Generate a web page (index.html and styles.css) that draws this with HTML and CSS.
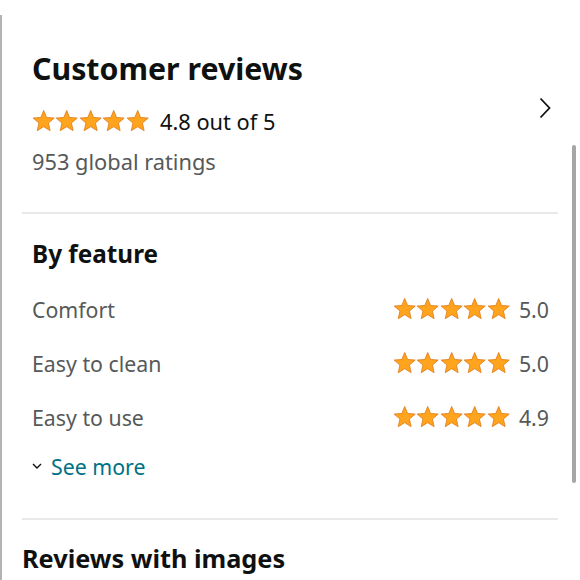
FILE: index.html
```html
<!DOCTYPE html>
<html>
<head>
<meta charset="utf-8">
<link rel="stylesheet" href="styles.css">
</head>
<body>
<svg width="0" height="0" class="defs">
  <defs>
    <symbol id="star" viewBox="0 0 24 24">
      <polygon points="12,1.2 14.95,8.4 22.8,9 16.85,14.1 18.6,21.9 12,17.8 5.4,21.9 7.15,14.1 1.2,9 9.05,8.4" fill="#ffa41c" stroke="#e07f1f" stroke-width="0.9" stroke-linejoin="round"/>
    </symbol>
  </defs>
</svg>
<div class="panel">
  <section class="summary">
    <h1 class="title">Customer reviews</h1>
    <div class="rating-row">
      <span class="stars">
        <svg class="star"><use href="#star"/></svg><svg class="star"><use href="#star"/></svg><svg class="star"><use href="#star"/></svg><svg class="star"><use href="#star"/></svg><svg class="star"><use href="#star"/></svg>
      </span>
      <span class="rating-text">4.8 out of 5</span>
      <svg class="chevron-right" viewBox="0 0 12 22"><polyline points="1.5,1.5 10.5,11 1.5,20.5" fill="none" stroke="#111" stroke-width="1.8"/></svg>
    </div>
    <div class="global">953 global ratings</div>
  </section>
  <hr class="divider">
  <section class="features">
    <h2 class="subtitle">By feature</h2>
    <div class="feature">
      <span class="feature-name">Comfort</span>
      <span class="feature-score">
        <span class="stars">
          <svg class="star"><use href="#star"/></svg><svg class="star"><use href="#star"/></svg><svg class="star"><use href="#star"/></svg><svg class="star"><use href="#star"/></svg><svg class="star"><use href="#star"/></svg>
        </span>
        <span class="score">5.0</span>
      </span>
    </div>
    <div class="feature">
      <span class="feature-name">Easy to clean</span>
      <span class="feature-score">
        <span class="stars">
          <svg class="star"><use href="#star"/></svg><svg class="star"><use href="#star"/></svg><svg class="star"><use href="#star"/></svg><svg class="star"><use href="#star"/></svg><svg class="star"><use href="#star"/></svg>
        </span>
        <span class="score">5.0</span>
      </span>
    </div>
    <div class="feature">
      <span class="feature-name">Easy to use</span>
      <span class="feature-score">
        <span class="stars">
          <svg class="star"><use href="#star"/></svg><svg class="star"><use href="#star"/></svg><svg class="star"><use href="#star"/></svg><svg class="star"><use href="#star"/></svg><svg class="star"><use href="#star"/></svg>
        </span>
        <span class="score">4.9</span>
      </span>
    </div>
    <a class="see-more" href="#">
      <svg class="chevron-down" viewBox="0 0 10 6"><polyline points="1,1 5,5 9,1" fill="none" stroke="#111" stroke-width="1.4"/></svg>
      <span>See more</span>
    </a>
  </section>
  <hr class="divider">
  <h2 class="images-title">Reviews with images</h2>
</div>
<div class="scrollbar"></div>
</body>
</html>
```
FILE: styles.css
```css
html, body {
  margin: 0;
  padding: 0;
  background: #fff;
  width: 580px;
  height: 580px;
  overflow: hidden;
  font-family: "Noto Sans", "Open Sans", sans-serif;
  color: #0f1111;
}
.defs { position: absolute; }
.panel {
  margin-top: 15px;
  height: 565px;
  border-left: 2px solid #b3b3b3;
  padding: 0 22px 0 20px;
  box-sizing: border-box;
}
.summary {
  padding: 35px 7px 0 10px;
}
.title {
  margin: 0;
  font-size: 30.3px;
  line-height: 38px;
  font-weight: 700;
}
.rating-row {
  display: flex;
  align-items: center;
  margin-top: 16px;
  height: 34px;
}
.stars {
  display: flex;
}
.star {
  width: 23.4px;
  height: 24px;
  display: block;
}
.rating-text {
  margin-left: 11px;
  font-size: 21.8px;
  color: #0f1111;
}
.chevron-right {
  margin-left: auto;
  width: 12px;
  height: 22px;
  margin-top: -26px;
}
.global {
  margin-top: 9px;
  font-size: 21.8px;
  line-height: 30px;
  color: #565959;
}
.divider {
  border: 0;
  border-top: 2px solid #e9e9e9;
  margin: 0;
}
.summary + .divider { margin-top: 35px; }
.features {
  padding: 23px 9px 0 10px;
}
.subtitle {
  margin: 0 0 18px;
  font-size: 24.3px;
  line-height: 34px;
  font-weight: 700;
}
.feature {
  display: flex;
  align-items: center;
  justify-content: space-between;
  height: 54px;
  margin-top: -7px;
}
.feature + .feature { margin-top: 0; }
.feature-name {
  font-size: 21.3px;
  color: #565959;
}
.feature-score {
  display: flex;
  align-items: center;
}
.score {
  margin-left: 9px;
  font-size: 21.3px;
  color: #565959;
}
.see-more {
  display: flex;
  align-items: center;
  text-decoration: none;
  color: #007185;
  font-size: 21.3px;
  height: 40px;
  margin-top: 2px;
}
.chevron-down {
  width: 10px;
  height: 6px;
  margin-right: 9px;
}
.features + .divider { margin-top: 32px; }
.images-title {
  margin: 21px 0 0;
  font-size: 25.3px;
  line-height: 34px;
  font-weight: 700;
}
.scrollbar {
  position: absolute;
  left: 572px;
  top: 145px;
  width: 4px;
  height: 338px;
  border-radius: 2px;
  background: #a6a6a6;
}
```
